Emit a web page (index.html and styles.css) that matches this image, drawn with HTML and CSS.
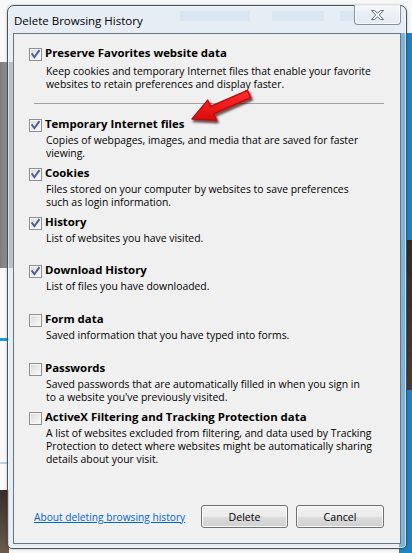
FILE: index.html
```html
<!DOCTYPE html>
<html lang="en">
<head>
<meta charset="utf-8">
<title>Delete Browsing History</title>
<link rel="stylesheet" href="styles.css">
</head>
<body>
<div class="desk">
  <div class="window">
    <div class="titlebar">
      <span class="title">Delete Browsing History</span>
      <button class="close" type="button" aria-label="Close">
        <svg width="15" height="10" viewBox="0 0 15 10"><polygon points="1.5,0.5 4.5,0.5 7.5,3.3 10.5,0.5 13.5,0.5 9.3,5 13.5,9.5 10.5,9.5 7.5,6.7 4.5,9.5 1.5,9.5 5.7,5" fill="#fbfcfd" stroke="#66717d" stroke-width="1" stroke-linejoin="round"/></svg>
      </button>
    </div>
    <div class="client">
      <div class="option first">
        <div class="head"><span class="cb checked"><svg viewBox="0 0 11 11"><path d="M2.2 5.2 L4.4 8.2 L8.9 1.9"/></svg></span><span class="label">Preserve Favorites website data</span></div>
        <p class="desc">Keep cookies and temporary Internet files that enable your favorite<br>websites to retain preferences and display faster.</p>
      </div>
      <div class="sep"></div>
      <div class="option">
        <div class="head"><span class="cb checked"><svg viewBox="0 0 11 11"><path d="M2.2 5.2 L4.4 8.2 L8.9 1.9"/></svg></span><span class="label">Temporary Internet files</span></div>
        <p class="desc">Copies of webpages, images, and media that are saved for faster<br>viewing.</p>
      </div>
      <div class="option">
        <div class="head"><span class="cb checked"><svg viewBox="0 0 11 11"><path d="M2.2 5.2 L4.4 8.2 L8.9 1.9"/></svg></span><span class="label">Cookies</span></div>
        <p class="desc">Files stored on your computer by websites to save preferences<br>such as login information.</p>
      </div>
      <div class="option">
        <div class="head"><span class="cb checked"><svg viewBox="0 0 11 11"><path d="M2.2 5.2 L4.4 8.2 L8.9 1.9"/></svg></span><span class="label">History</span></div>
        <p class="desc">List of websites you have visited.</p>
      </div>
      <div class="option">
        <div class="head"><span class="cb checked"><svg viewBox="0 0 11 11"><path d="M2.2 5.2 L4.4 8.2 L8.9 1.9"/></svg></span><span class="label">Download History</span></div>
        <p class="desc">List of files you have downloaded.</p>
      </div>
      <div class="option">
        <div class="head"><span class="cb"></span><span class="label">Form data</span></div>
        <p class="desc">Saved information that you have typed into forms.</p>
      </div>
      <div class="option">
        <div class="head"><span class="cb"></span><span class="label">Passwords</span></div>
        <p class="desc">Saved passwords that are automatically filled in when you sign in<br>to a website you've previously visited.</p>
      </div>
      <div class="option">
        <div class="head"><span class="cb"></span><span class="label">ActiveX Filtering and Tracking Protection data</span></div>
        <p class="desc">A list of websites excluded from filtering, and data used by Tracking<br>Protection to detect where websites might be automatically sharing<br>details about your visit.</p>
      </div>
      <div class="footer">
        <a class="help" href="#">About deleting browsing history</a>
        <button class="btn btn-delete" type="button">Delete</button>
        <button class="btn btn-cancel" type="button">Cancel</button>
      </div>
    </div>
  </div>
  <svg class="arrow" width="74" height="46" viewBox="184 82 74 46">
    <defs>
      <filter id="sh" x="-20%" y="-20%" width="140%" height="140%"><feGaussianBlur stdDeviation="1.3"/></filter>
      <linearGradient id="rg" x1="0" y1="0" x2="0" y2="1">
        <stop offset="0" stop-color="#ff3030"/>
        <stop offset="1" stop-color="#d80a0a"/>
      </linearGradient>
    </defs>
    <polygon transform="translate(1.5,2.2)" filter="url(#sh)" fill="rgba(50,0,0,0.6)" stroke="rgba(50,0,0,0.6)" stroke-width="2" stroke-linejoin="round" points="192,119 216.5,120.3 213.7,113.9 250.6,97.7 247.4,90.3 210.5,106.5 207.7,100.1"/>
    <polygon fill="url(#rg)" stroke="#c00c0c" stroke-width="1.4" stroke-linejoin="round" points="192,119 216.5,120.3 213.7,113.9 250.6,97.7 247.4,90.3 210.5,106.5 207.7,100.1"/>
  </svg>
</div>
</body>
</html>
```
FILE: styles.css
```css
* {
  box-sizing: border-box;
}

html,
body {
  margin: 0;
  padding: 0;
}

body {
  width: 412px;
  height: 553px;
  overflow: hidden;
  font-family: "Open Sans", "Noto Sans", sans-serif;
  font-size: 10.4px;
  color: #000;
}

.desk {
  position: relative;
  width: 412px;
  height: 553px;
  padding: 5px 0 0 7px;
  background:
    linear-gradient(#dde8f5, #dde8f5) no-repeat 180px 11px / 70px 10px,
    linear-gradient(#e1ebf6, #e1ebf6) no-repeat 272px 11px / 52px 10px,
    linear-gradient(#e1ebf6, #e1ebf6) no-repeat 340px 11px / 40px 10px,
    linear-gradient(to right, #7d7d7d, #a3a3a3) no-repeat 0 62px / 13px 206px,
    linear-gradient(#1e9ad8, #1e9ad8) no-repeat 0 338px / 9px 3px,
    linear-gradient(#bcd2e2, #bcd2e2) no-repeat 0 462px / 9px 2px,
    linear-gradient(#3a2d2a, #6b5a4a) no-repeat 0 490px / 9px 63px,
    linear-gradient(#2f2c2a, #4b3a33) no-repeat 406px 240px / 6px 150px,
    linear-gradient(#1b86c7, #1b86c7) no-repeat 399px 33px / 13px 520px,
    #f8f8f8;
}

.window {
  width: 400px;
  height: 544px;
  border: 1px solid #46515c;
  border-radius: 7px 7px 5px 5px;
  padding: 0 5px 4px;
  background: rgba(214, 226, 240, 0.5);
  box-shadow: inset 0 0 0 1px rgba(255, 255, 255, 0.55), 0 0 3px rgba(0, 0, 0, 0.25);
  display: flex;
  flex-direction: column;
}

.titlebar {
  height: 27px;
  flex: none;
  display: flex;
  justify-content: space-between;
  align-items: flex-start;
}

.title {
  padding: 1px 0 0 1px;
  line-height: 27px;
  font-size: 11.5px;
  color: #000;
  white-space: nowrap;
}

.close {
  width: 47px;
  height: 20px;
  margin-top: -1px;
  padding: 0;
  border: 1px solid #87919b;
  border-top: none;
  border-radius: 0 0 4px 4px;
  background: linear-gradient(rgba(255, 255, 255, 0.55), rgba(226, 233, 241, 0.65));
  box-shadow: inset 0 0 0 1px rgba(255, 255, 255, 0.75);
  display: flex;
  align-items: center;
  justify-content: center;
}

.close svg {
  display: block;
  margin-top: 1px;
}

.client {
  flex: 1;
  border: 1px solid #6b7683;
  background: #f0f0f0;
  padding: 11px 16px 15px 15px;
  display: flex;
  flex-direction: column;
}

.option {
  height: 48.8px;
  flex: none;
}

.option.first {
  height: auto;
}

.head {
  height: 16px;
  display: flex;
  align-items: flex-start;
  gap: 3px;
}

.label {
  font-weight: bold;
  font-size: 11.4px;
  line-height: 16px;
  white-space: nowrap;
}

.cb {
  width: 13px;
  height: 13px;
  margin-top: 3px;
  flex: none;
  border: 1px solid #8e8f8f;
  background: linear-gradient(135deg, #d9d9d9 0%, #ececec 55%, #fbfbfb 100%);
  box-shadow: inset 0 0 0 1px #f6f6f6;
  position: relative;
}

.cb svg {
  position: absolute;
  left: 0;
  top: 0;
  width: 11px;
  height: 11px;
  fill: none;
  stroke: #4a5b8c;
  stroke-width: 1.9;
  stroke-linecap: square;
}

.desc {
  margin: 2px 0 0 17px;
  line-height: 13px;
  white-space: nowrap;
}

.first .desc {
  margin-top: 4px;
}

.sep {
  height: 1px;
  margin: 12px 0 12px 5px;
  background: #a0a0a0;
  flex: none;
}

.footer {
  margin-top: auto;
  display: flex;
  align-items: center;
  gap: 8px;
}

.help {
  flex: 1;
  margin-left: 5px;
  font-size: 10.2px;
  line-height: 16px;
  color: #0066cc;
  text-decoration: underline;
  white-space: nowrap;
}

.btn {
  height: 23px;
  padding: 0;
  font-family: inherit;
  font-size: 10.6px;
  color: #000;
  border: 1px solid #707070;
  border-radius: 3px;
  background: linear-gradient(#f2f2f2 0%, #ebebeb 50%, #dddddd 51%, #cfcfcf 100%);
  box-shadow: inset 0 0 0 1px #fbfbfb;
}

.btn-delete {
  width: 87px;
}

.btn-cancel {
  width: 88px;
}

.arrow {
  position: absolute;
  left: 184px;
  top: 82px;
  pointer-events: none;
}
```
